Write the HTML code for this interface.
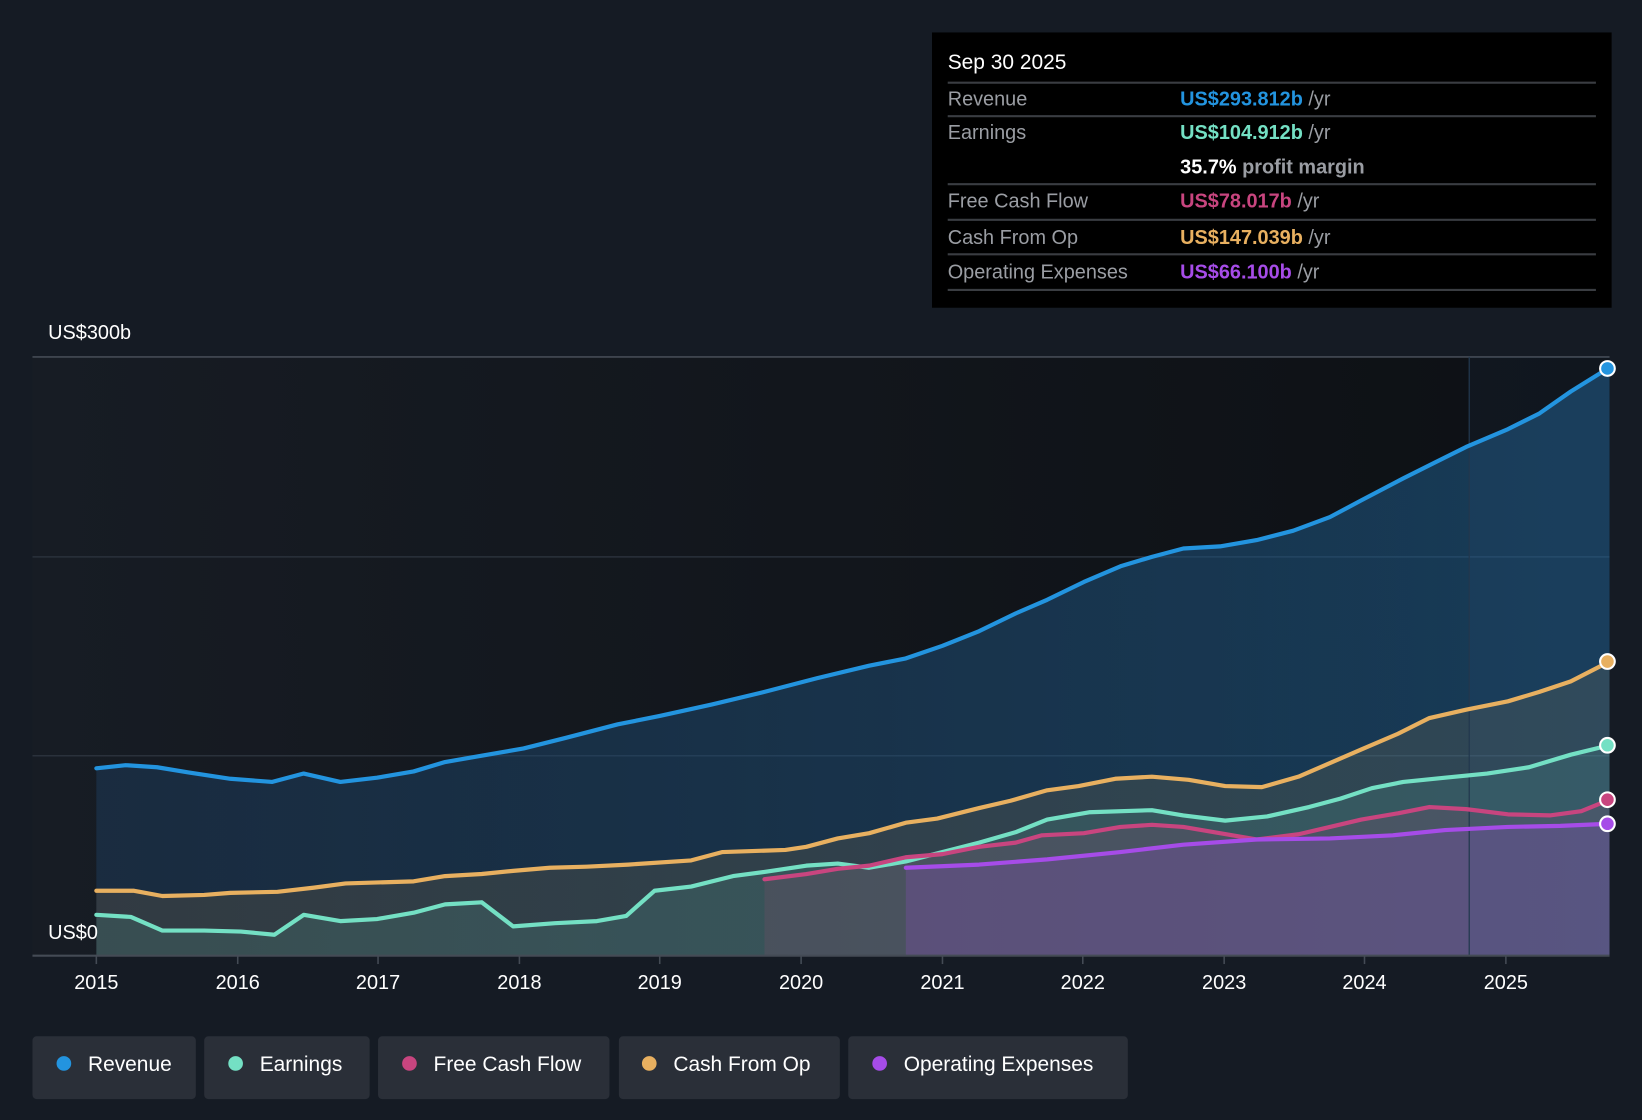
<!DOCTYPE html>
<html><head><meta charset="utf-8"><style>
html,body{margin:0;padding:0;background:#151b24;overflow:hidden}
svg{display:block}
text{font-family:"Liberation Sans",sans-serif}
</style></head><body>
<svg width="1642" height="1120" viewBox="0 0 1568 1070" preserveAspectRatio="none" xmlns="http://www.w3.org/2000/svg">
<defs>
<linearGradient id="pbg" x1="0" x2="1" y1="0" y2="0"><stop offset="0" stop-color="#171c24"/><stop offset="1" stop-color="#0d1014"/></linearGradient>
<linearGradient id="rev" x1="0" x2="1" y1="0" y2="0"><stop offset="0" stop-color="#1d3f62" stop-opacity="0.45"/><stop offset="1" stop-color="#1f5f8f" stop-opacity="0.55"/></linearGradient>
</defs>
<rect width="1568" height="1070" fill="#151b24"/>
<rect x="31" y="341" width="1506" height="572" fill="url(#pbg)"/>
<g stroke="#2a313b" stroke-width="1.5"><line x1="31" y1="532" x2="1537" y2="532"/><line x1="31" y1="722" x2="1537" y2="722"/></g>
<line x1="31" y1="341" x2="1537" y2="341" stroke="#444b55" stroke-width="1.5"/>
<path fill="url(#rev)" d="M92,734 L120,731 150,733 180,738 220,744 260,747 290,739 325,747 360,743 395,737 425,728 460,722 500,715 540,705 590,692 630,684 680,673 730,661 780,648 830,636 865,629 900,617 935,603 970,586 1000,573 1035,556 1070,541 1100,532 1130,524 1165,522 1200,516 1235,507 1270,494 1300,478 1340,457 1370,442 1400,427 1440,410 1470,395 1500,374 1537,351 L1537,913 L92,913Z"/>
<path fill="#c89a55" fill-opacity="0.14" d="M92,851 L128,851 155,856 195,855 220,853 265,852 300,848 330,844 395,842 425,837 460,835 490,832 525,829 560,828 600,826 660,822 690,814 750,812 770,809 800,801 830,796 865,786 895,782 935,772 965,765 1000,755 1030,751 1065,744 1100,742 1135,745 1170,751 1205,752 1240,742 1270,729 1300,716 1335,701 1365,686 1400,678 1440,670 1470,661 1500,651 1537,632 L1537,913 L92,913Z"/>
<path fill="#6ee0c6" fill-opacity="0.12" d="M92,874 L125,876 155,889 195,889 230,890 262,893 290,874 325,880 360,878 395,872 425,864 460,862 490,885 530,882 570,880 598,875 625,851 660,847 700,837 730,833 770,827 800,825 830,829 865,823 900,814 935,805 970,795 1000,783 1040,776 1100,774 1130,779 1170,784 1210,780 1250,771 1280,763 1310,753 1340,747 1380,743 1420,739 1460,733 1500,721 1537,712 L1537,913 L92,913Z"/>
<path fill="#c8457f" fill-opacity="0.13" d="M730,840 L770,835 800,830 830,827 865,819 900,816 935,809 970,805 995,798 1035,796 1070,790 1100,788 1130,790 1165,796 1200,802 1240,797 1270,790 1300,783 1335,777 1365,771 1400,773 1440,778 1480,779 1510,775 1537,764 L1537,913 L730,913Z"/>
<path fill="#a64ce8" fill-opacity="0.2" d="M865,829 L935,826 1000,821 1070,814 1130,807 1200,802 1270,801 1330,798 1380,793 1440,790 1490,789 1537,787 L1537,913 L865,913Z"/>
<rect x="1403" y="341" width="134" height="572" fill="#3a6a9a" fill-opacity="0.08"/>
<line x1="1403" y1="341" x2="1403" y2="913" stroke="#22384d" stroke-width="1.2"/>
<g fill="none" stroke-width="4" stroke-linejoin="round" stroke-linecap="round">
<path stroke="#2394df" d="M92,734 L120,731 150,733 180,738 220,744 260,747 290,739 325,747 360,743 395,737 425,728 460,722 500,715 540,705 590,692 630,684 680,673 730,661 780,648 830,636 865,629 900,617 935,603 970,586 1000,573 1035,556 1070,541 1100,532 1130,524 1165,522 1200,516 1235,507 1270,494 1300,478 1340,457 1370,442 1400,427 1440,410 1470,395 1500,374 1537,351"/>
<path stroke="#e8b060" d="M92,851 L128,851 155,856 195,855 220,853 265,852 300,848 330,844 395,842 425,837 460,835 490,832 525,829 560,828 600,826 660,822 690,814 750,812 770,809 800,801 830,796 865,786 895,782 935,772 965,765 1000,755 1030,751 1065,744 1100,742 1135,745 1170,751 1205,752 1240,742 1270,729 1300,716 1335,701 1365,686 1400,678 1440,670 1470,661 1500,651 1537,632"/>
<path stroke="#74e0c4" d="M92,874 L125,876 155,889 195,889 230,890 262,893 290,874 325,880 360,878 395,872 425,864 460,862 490,885 530,882 570,880 598,875 625,851 660,847 700,837 730,833 770,827 800,825 830,829 865,823 900,814 935,805 970,795 1000,783 1040,776 1100,774 1130,779 1170,784 1210,780 1250,771 1280,763 1310,753 1340,747 1380,743 1420,739 1460,733 1500,721 1537,712"/>
<path stroke="#c8457f" d="M730,840 L770,835 800,830 830,827 865,819 900,816 935,809 970,805 995,798 1035,796 1070,790 1100,788 1130,790 1165,796 1200,802 1240,797 1270,790 1300,783 1335,777 1365,771 1400,773 1440,778 1480,779 1510,775 1537,764"/>
<path stroke="#a64ce8" d="M865,829 L935,826 1000,821 1070,814 1130,807 1200,802 1270,801 1330,798 1380,793 1440,790 1490,789 1537,787"/>
</g>
<g stroke="#fff" stroke-width="2">
<circle cx="1535" cy="352" r="7" fill="#2394df"/>
<circle cx="1535" cy="632" r="7" fill="#e8b060"/>
<circle cx="1535" cy="712" r="7" fill="#74e0c4"/>
<circle cx="1535" cy="764" r="7" fill="#c8457f"/>
<circle cx="1535" cy="787" r="7" fill="#a64ce8"/>
</g>
<line x1="31" y1="913" x2="1537" y2="913" stroke="#444b55" stroke-width="2"/>
<text x="46" y="324" fill="#fff" font-size="19">US$300b</text>
<text x="46" y="897" fill="#fff" font-size="19">US$0</text>
<g stroke="#444b55" stroke-width="1.5">
<line x1="92" y1="913" x2="92" y2="921"/><line x1="227" y1="913" x2="227" y2="921"/><line x1="361" y1="913" x2="361" y2="921"/><line x1="496" y1="913" x2="496" y2="921"/><line x1="630" y1="913" x2="630" y2="921"/><line x1="765" y1="913" x2="765" y2="921"/><line x1="900" y1="913" x2="900" y2="921"/><line x1="1034" y1="913" x2="1034" y2="921"/><line x1="1169" y1="913" x2="1169" y2="921"/><line x1="1303" y1="913" x2="1303" y2="921"/><line x1="1438" y1="913" x2="1438" y2="921"/>
</g>
<g fill="#fff" font-size="19" text-anchor="middle">
<text x="92" y="945">2015</text><text x="227" y="945">2016</text><text x="361" y="945">2017</text><text x="496" y="945">2018</text><text x="630" y="945">2019</text><text x="765" y="945">2020</text><text x="900" y="945">2021</text><text x="1034" y="945">2022</text><text x="1169" y="945">2023</text><text x="1303" y="945">2024</text><text x="1438" y="945">2025</text>
</g>
<rect x="890" y="31" width="649" height="263" fill="#000"/>
<g stroke="#3a3d42" stroke-width="2">
<line x1="905" y1="79" x2="1524" y2="79"/><line x1="905" y1="111" x2="1524" y2="111"/><line x1="905" y1="176" x2="1524" y2="176"/><line x1="905" y1="210" x2="1524" y2="210"/><line x1="905" y1="243" x2="1524" y2="243"/><line x1="905" y1="277" x2="1524" y2="277"/>
</g>
<g font-size="19">
<text x="905" y="66" fill="#fff" font-size="20">Sep 30 2025</text>
<text x="905" y="101" fill="#9a9da3">Revenue</text>
<text x="1127" y="101" fill="#2394df" font-weight="bold">US$293.812b <tspan fill="#9a9da3" font-weight="normal">/yr</tspan></text>
<text x="905" y="133" fill="#9a9da3">Earnings</text>
<text x="1127" y="133" fill="#74e0c4" font-weight="bold">US$104.912b <tspan fill="#9a9da3" font-weight="normal">/yr</tspan></text>
<text x="1127" y="166" fill="#fff" font-weight="bold">35.7% <tspan fill="#9a9da3">profit margin</tspan></text>
<text x="905" y="198" fill="#9a9da3">Free Cash Flow</text>
<text x="1127" y="198" fill="#c8457f" font-weight="bold">US$78.017b <tspan fill="#9a9da3" font-weight="normal">/yr</tspan></text>
<text x="905" y="233" fill="#9a9da3">Cash From Op</text>
<text x="1127" y="233" fill="#e8b060" font-weight="bold">US$147.039b <tspan fill="#9a9da3" font-weight="normal">/yr</tspan></text>
<text x="905" y="266" fill="#9a9da3">Operating Expenses</text>
<text x="1127" y="266" fill="#a64ce8" font-weight="bold">US$66.100b <tspan fill="#9a9da3" font-weight="normal">/yr</tspan></text>
</g>
<g fill="#2a2f38">
<rect x="31" y="990" width="156" height="60" rx="4"/><rect x="195" y="990" width="158" height="60" rx="4"/><rect x="361" y="990" width="221" height="60" rx="4"/><rect x="591" y="990" width="211" height="60" rx="4"/><rect x="810" y="990" width="267" height="60" rx="4"/>
</g>
<circle cx="61" cy="1016" r="7" fill="#2394df"/><circle cx="225" cy="1016" r="7" fill="#74e0c4"/><circle cx="391" cy="1016" r="7" fill="#c8457f"/><circle cx="620" cy="1016" r="7" fill="#e8b060"/><circle cx="840" cy="1016" r="7" fill="#a64ce8"/>
<g fill="#fff" font-size="20">
<text x="84" y="1023">Revenue</text><text x="248" y="1023">Earnings</text><text x="414" y="1023">Free Cash Flow</text><text x="643" y="1023">Cash From Op</text><text x="863" y="1023">Operating Expenses</text>
</g>
</svg>
</body></html>
